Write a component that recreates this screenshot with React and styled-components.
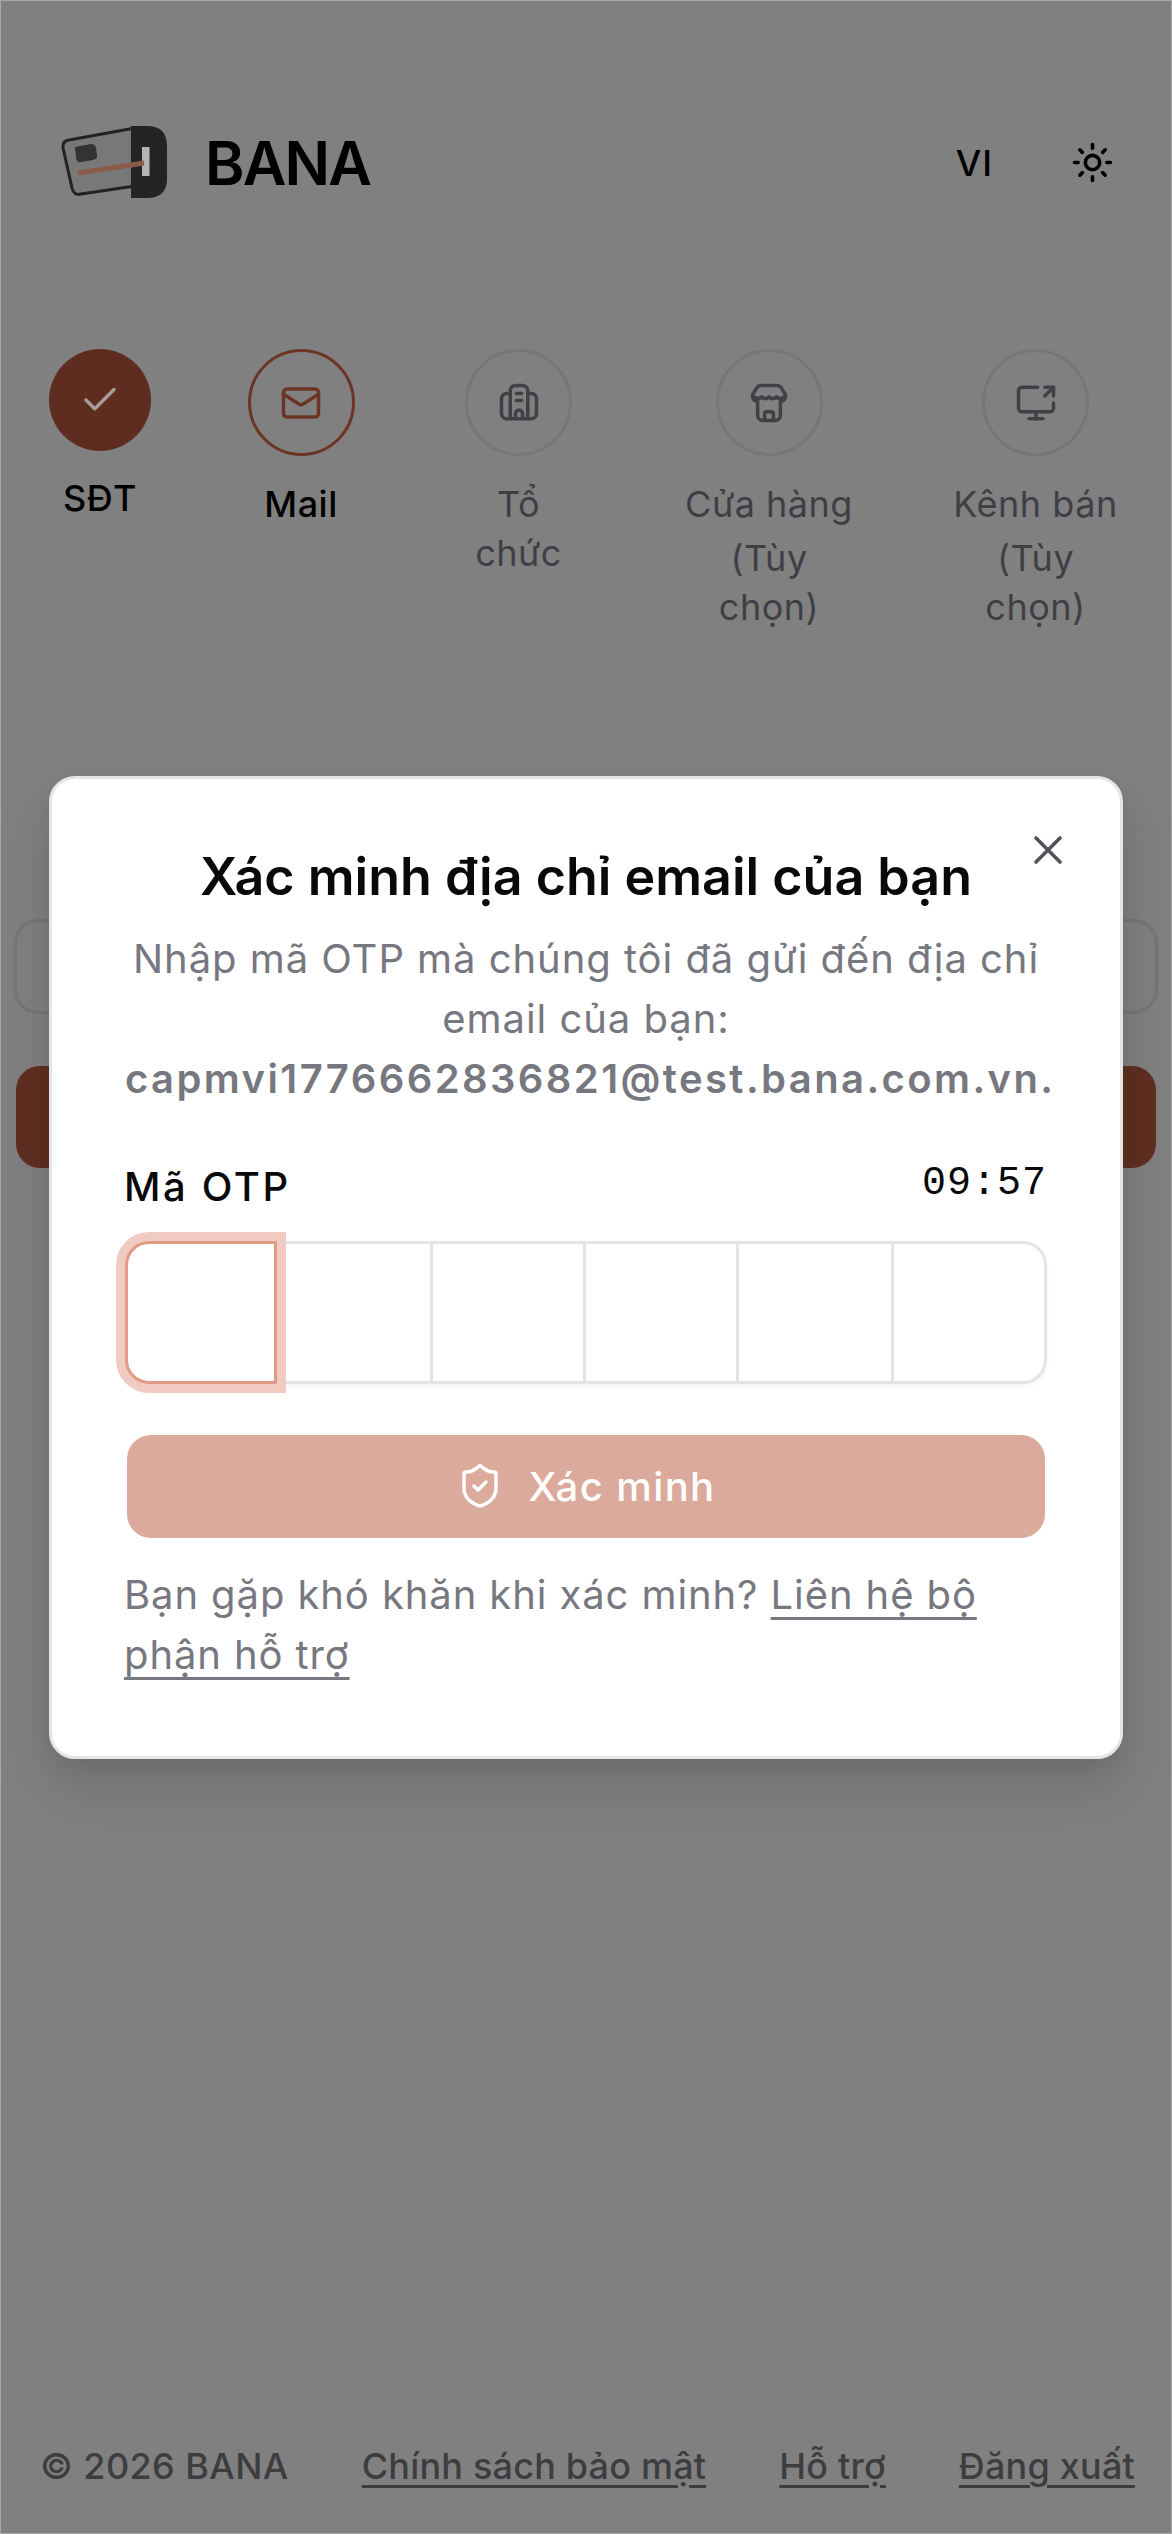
import React from "react";
import styled, { createGlobalStyle } from "styled-components";
import { Check, Mail, ScreenShare, ShieldCheck, Sun, X } from "lucide-react";

const Global = createGlobalStyle`
  html, body { margin: 0; padding: 0; background: #808080; }
  * { box-sizing: border-box; }
  body { font-family: Inter, "Noto Sans", sans-serif; }
`;

const Page = styled.div`
  position: relative;
  width: 1172px;
  height: 2534px;
  overflow: hidden;
  background: #808080;
  box-shadow: inset 0 0 0 1px #a8a8a8;
  display: flex;
  flex-direction: column;
`;

const Header = styled.header`
  display: flex;
  align-items: center;
  justify-content: space-between;
  height: 73px;
  margin-top: 126px;
  padding: 0 58px 0 60px;
`;
const Brand = styled.div`
  display: flex;
  align-items: center;
  gap: 37px;
`;
const BrandName = styled.span`
  font-size: 60px;
  font-weight: 600;
  letter-spacing: -1.8px;
  color: #000;
`;
const HeaderActions = styled.div`
  display: flex;
  align-items: center;
  gap: 78px;
  color: #000;
`;
const Lang = styled.span`
  font-size: 36px;
  font-weight: 450;
  letter-spacing: 1px;
`;

const Steps = styled.nav`
  display: grid;
  grid-template-columns: 200px 202px 233px 268px 265px;
  margin-top: 150px;
`;
const Step = styled.div`
  display: flex;
  flex-direction: column;
  align-items: center;
`;
const Circle = styled.div`
  width: ${(p) => (p.$state === "done" ? 102 : 107)}px;
  height: ${(p) => (p.$state === "done" ? 102 : 107)}px;
  border-radius: 50%;
  display: flex;
  align-items: center;
  justify-content: center;
  background: ${(p) => (p.$state === "done" ? "#5f2d20" : "transparent")};
  border: ${(p) =>
    p.$state === "done" ? "none" : p.$state === "active" ? "3px solid #6c3425" : "3px solid #767676"};
  color: ${(p) => (p.$state === "done" ? "#a59d98" : p.$state === "active" ? "#6c3425" : "#3f4146")};
`;
const StepLabel = styled.div`
  margin-top: ${(p) => (p.$state === "done" ? 23 : 24)}px;
  font-size: 36px;
  line-height: 49px;
  letter-spacing: 0.5px;
  text-align: center;
  font-weight: ${(p) => (p.$state === "pending" ? 400 : 450)};
  color: ${(p) => (p.$state === "pending" ? "#3d3f45" : "#000")};
`;
const Line = styled.div`
  margin-top: ${(p) => (p.$shift ? 5 : 0)}px;
`;

const Form = styled.div`
  position: absolute;
  left: 14px;
  right: 14px;
  top: 919px;
  display: flex;
  flex-direction: column;
  gap: 52px;
`;
const GhostInput = styled.div`
  height: 95px;
  border: 3px solid #767676;
  border-radius: 24px;
`;
const GhostButton = styled.div`
  height: 102px;
  margin: 0 2px;
  border-radius: 24px;
  background: #5f2f21;
`;

const Footer = styled.footer`
  margin-top: auto;
  height: 93px;
  padding: 0 37px 0 40px;
  display: flex;
  align-items: flex-start;
  justify-content: space-between;
  font-size: 36px;
  line-height: 50px;
  font-weight: 450;
  letter-spacing: 0.2px;
  color: #3d3d40;
`;
const Copy = styled.span`
  letter-spacing: 0.4px;
`;
const FootLink = styled.a`
  color: inherit;
  text-decoration: underline;
  text-underline-offset: 6px;
  text-decoration-thickness: 3px;
`;

const Overlay = styled.div`
  position: absolute;
  inset: 0;
  display: flex;
  align-items: center;
  justify-content: center;
`;
const Modal = styled.div`
  position: relative;
  width: 1074px;
  height: 983px;
  padding: 63px 73px 0;
  background: #fff;
  border: 3px solid #e5e5e5;
  border-radius: 26px;
  box-shadow: 0 30px 60px rgba(0, 0, 0, 0.12), 0 10px 20px rgba(0, 0, 0, 0.06);
`;
const Close = styled.button`
  position: absolute;
  top: 47px;
  right: 48px;
  padding: 0;
  border: none;
  background: none;
  display: flex;
  color: #52525b;
`;
const Title = styled.h2`
  margin: 0 -20px;
  font-size: 52px;
  line-height: 70px;
  font-weight: 600;
  text-align: center;
  color: #09090b;
`;
const Sub = styled.p`
  margin: 17px 0 0;
  font-size: 40px;
  line-height: 60px;
  letter-spacing: 0.95px;
  text-align: center;
  color: #77777f;
`;
const Email = styled.strong`
  font-weight: 600;
  letter-spacing: 2.4px;
`;
const OtpHead = styled.div`
  margin-top: 48px;
  display: flex;
  justify-content: space-between;
  align-items: flex-start;
  line-height: 60px;
`;
const OtpLabel = styled.span`
  margin-left: -1px;
  font-size: 40px;
  font-weight: 450;
  letter-spacing: 2.6px;
  color: #09090b;
`;
const Timer = styled.span`
  font-family: "Liberation Mono", monospace;
  font-size: 40px;
  line-height: 54px;
  letter-spacing: 1px;
  color: #09090b;
`;
const Otp = styled.div`
  margin-top: 24px;
  display: grid;
  grid-template-columns: 152px 156px 153px 153px 155px 153px;
  height: 143px;
  border-radius: 24px;
  box-shadow: 0 2px 4px rgba(0, 0, 0, 0.05);
`;
const Cell = styled.div`
  position: relative;
  background: #fff;
  border: 3px solid #e4e4e7;
  border-left-width: ${(p) => (p.$first ? 3 : 0)}px;
  border-radius: ${(p) => (p.$first ? "24px 0 0 24px" : p.$last ? "0 24px 24px 0" : "0")};
  ${(p) =>
    p.$focus &&
    `border: 3px solid #e09b85; border-radius: 24px 0 0 24px; box-shadow: 0 0 0 9px #f1cbc1; z-index: 1;`}
`;
const Submit = styled.button`
  margin: 51px 2px 0;
  width: calc(100% - 4px);
  height: 103px;
  border: none;
  border-radius: 24px;
  background: #dcaa9d;
  color: #fff;
  display: flex;
  align-items: center;
  justify-content: center;
  gap: 24px;
  font-family: inherit;
  font-size: 40px;
  font-weight: 500;
  letter-spacing: 1.4px;
`;
const Help = styled.p`
  margin: 27px 0 0 -1px;
  font-size: 40px;
  line-height: 60px;
  letter-spacing: 0.9px;
  color: #77777f;
`;
const HelpLink = styled.a`
  color: inherit;
  text-decoration: underline;
  text-decoration-skip-ink: none;
  text-underline-offset: 8px;
  text-decoration-thickness: 3px;
`;

const Logo = () => (
  <svg width="108" height="73" viewBox="0 0 108 73" fill="none">
    <path
      d="M75 2 L9 14 Q2 15 3 22 L12 62 Q14 70 21 68 L75 60 Z"
      fill="#787878"
      stroke="#222"
      strokeWidth="3"
      strokeLinejoin="round"
    />
    <path d="M71 0H87Q107 0 107 20V53Q107 72 87 72H71Z" fill="#242424" />
    <rect x="82" y="21" width="7.5" height="29" fill="#b4b4b4" />
    <path d="M15 21 L31 18 Q35 18 36 22 L37 29 Q38 33 33 34 L21 36 Q17 37 16 32 Z" fill="#333" />
    <path d="M18 47 L84 37" stroke="#8a5a4b" strokeWidth="5" />
  </svg>
);

const BuildingIcon = () => (
  <svg width="42" height="42" viewBox="0 0 24 24" fill="none" stroke="currentColor" strokeWidth="2" strokeLinecap="round" strokeLinejoin="round">
    <path d="M7 21V5a3 3 0 0 1 3-3h4a3 3 0 0 1 3 3v16" />
    <path d="M7 6.500H5a3 3 0 0 0-3 3V18a3 3 0 0 0 3 3h14a3 3 0 0 0 3-3V9.500a3 3 0 0 0-3-3h-2" />
    <path d="M10.500 6.500h3M10.500 10.500h3M10 21v-3a2 2 0 0 1 4 0v3" />
  </svg>
);

const StoreIcon = () => (
  <svg width="42" height="42" viewBox="0 0 24 24" fill="none" stroke="currentColor" strokeWidth="2" strokeLinecap="round" strokeLinejoin="round">
    <path d="M7.500 2h9a3 3 0 0 1 2.600 1.500l2 3.300c1 1.900-.4 4.200-2.600 4.200V19a3 3 0 0 1-3 3H8.500a3 3 0 0 1-3-3v-8c-2.200 0-3.600-2.300-2.600-4.200l2-3.300A3 3 0 0 1 7.500 2Z" />
    <path d="M3.500 8.500c1.400 1.300 2.800 1.300 4.200 0 1.400 1.300 2.900 1.300 4.300 0 1.400 1.300 2.900 1.300 4.300 0 1.400 1.300 2.800 1.300 4.200 0" />
    <path d="M9.500 22v-4a1 1 0 0 1 1-1h3a1 1 0 0 1 1 1v4" />
  </svg>
);

const steps = [
  { state: "done", icon: <Check size={42} strokeWidth={2} />, lines: ["SĐT"] },
  { state: "active", icon: <Mail size={42} strokeWidth={2} />, lines: ["Mail"] },
  { state: "pending", icon: <BuildingIcon />, lines: ["Tổ", "chức"] },
  { state: "pending", icon: <StoreIcon />, lines: ["Cửa hàng", "(Tùy", "chọn)"] },
  { state: "pending", icon: <ScreenShare size={42} strokeWidth={2} />, lines: ["Kênh bán", "(Tùy", "chọn)"] },
];

export default function App() {
  return (
    <>
      <Global />
      <Page>
        <Header>
          <Brand>
            <Logo />
            <BrandName>BANA</BrandName>
          </Brand>
          <HeaderActions>
            <Lang>VI</Lang>
            <Sun size={43} strokeWidth={2} />
          </HeaderActions>
        </Header>
        <Steps>
          {steps.map((s) => (
            <Step key={s.lines[0]}>
              <Circle $state={s.state}>{s.icon}</Circle>
              <StepLabel $state={s.state}>
                {s.lines.map((l, i) => (
                  <Line key={l} $shift={i === 1 && s.lines.length === 3}>
                    {l}
                  </Line>
                ))}
              </StepLabel>
            </Step>
          ))}
        </Steps>
        <Form>
          <GhostInput />
          <GhostButton />
        </Form>
        <Footer>
          <Copy>© 2026 BANA</Copy>
          <FootLink>Chính sách bảo mật</FootLink>
          <FootLink>Hỗ trợ</FootLink>
          <FootLink>Đăng xuất</FootLink>
        </Footer>
        <Overlay>
          <Modal>
            <Close aria-label="Đóng">
              <X size={48} strokeWidth={1.8} />
            </Close>
            <Title>Xác minh địa chỉ email của bạn</Title>
            <Sub>
              Nhập mã OTP mà chúng tôi đã gửi đến địa chỉ email của bạn:{" "}
              <Email>capmvi1776662836821@test.bana.com.vn.</Email>
            </Sub>
            <OtpHead>
              <OtpLabel>Mã OTP</OtpLabel>
              <Timer>09:57</Timer>
            </OtpHead>
            <Otp>
              {[0, 1, 2, 3, 4, 5].map((i) => (
                <Cell key={i} $first={i === 0} $focus={i === 0} $last={i === 5} />
              ))}
            </Otp>
            <Submit>
              <ShieldCheck size={48} strokeWidth={1.75} />
              Xác minh
            </Submit>
            <Help>
              Bạn gặp khó khăn khi xác minh? <HelpLink>Liên hệ bộ phận hỗ trợ</HelpLink>
            </Help>
          </Modal>
        </Overlay>
      </Page>
    </>
  );
}
